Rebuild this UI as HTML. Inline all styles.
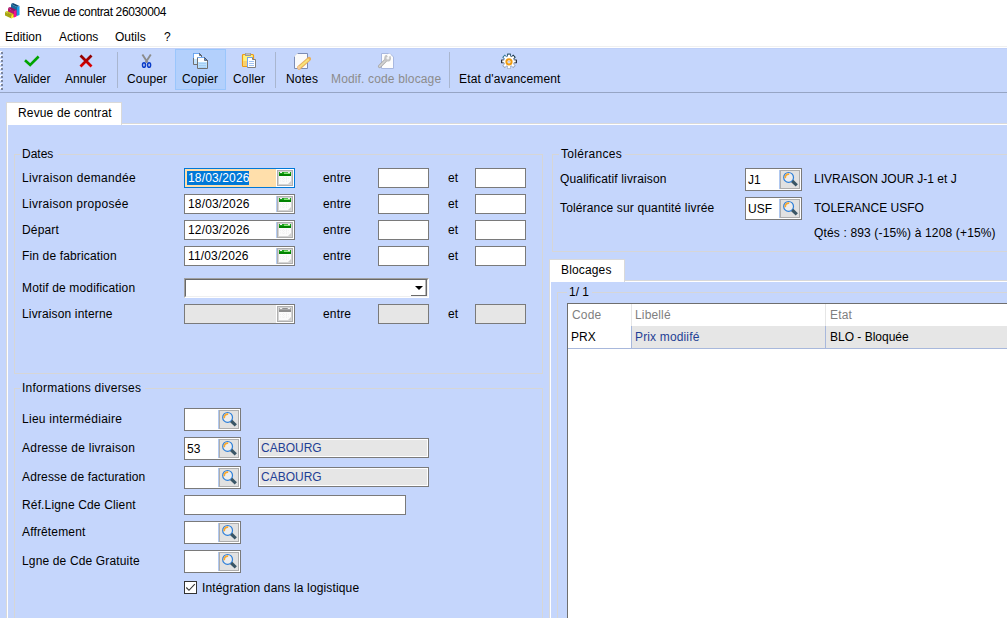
<!DOCTYPE html>
<html><head><meta charset="utf-8">
<style>
*{margin:0;padding:0;box-sizing:border-box}
html,body{width:1007px;height:618px;overflow:hidden}
body{position:relative;background:#fff;font-family:"Liberation Sans",sans-serif;font-size:12px;color:#000}
.a{position:absolute}
.t{position:absolute;white-space:pre;line-height:14px;font-size:12px;letter-spacing:0.15px}
.bl{background:#C5D6FC}
.grp{position:absolute;border:1px solid #D6D6D6}
.gl{position:absolute;white-space:pre;line-height:14px;background:#C5D6FC;padding:0 3px 0 2px}
.box{position:absolute;border:1px solid #7A7A7A;background:#fff;height:20px}
.sbox{position:absolute;border:1px solid #7A7A7A;background:#fff;width:57px;height:23px}
.sbtn{position:absolute;left:34px;top:1px;width:20px;height:19px;background:#E1E1E1;border:1px solid #ADADAD;border-left:1px solid #A6C0EE}
.sbtn svg{position:absolute;left:1px;top:0}
.cal{position:absolute;left:92px;top:1px;width:17px;height:17px}
.grey{background:#E6E6E6}
</style></head><body>

<!-- title bar -->
<svg class="a" style="left:0px;top:0px" width="22" height="22" viewBox="0 0 22 22">
<path d="M11 4 L13 3 L19.5 6 L17 7Z" fill="#0F4A78"/><path d="M11 4 L17 7 L17 16 L11 12.5Z" fill="#1C6A9C"/><path d="M17 7 L19.5 6 L19.5 15 L17 16Z" fill="#1A9BE8"/>
<path d="M8 8 L10 7 L16.5 10 L14 11Z" fill="#9A1060"/><path d="M8 8 L14 11 L14 17.5 L8 14.5Z" fill="#B8186E"/><path d="M14 11 L16.5 10 L16.5 16.5 L14 17.5Z" fill="#F4108C"/>
<path d="M5 12 L7 11 L13.5 14 L11.5 15Z" fill="#C4C418"/><path d="M5 12 L11.5 15 L11.5 18.5 L5 15.5Z" fill="#A6A612"/><path d="M11.5 15 L13.5 14 L13.5 17.5 L11.5 18.5Z" fill="#FAFA10"/>
</svg>
<div class="t" style="left:27px;top:5px;letter-spacing:-0.36px">Revue de contrat 26030004</div>

<!-- menu -->
<div class="t" style="left:5px;top:30px;letter-spacing:0">Edition</div>
<div class="t" style="left:59px;top:30px;letter-spacing:0">Actions</div>
<div class="t" style="left:115px;top:30px;letter-spacing:0">Outils</div>
<div class="t" style="left:164px;top:30px">?</div>
<div class="a" style="left:0;top:46px;width:1007px;height:1px;background:#F0F0F0"></div>

<!-- toolbar -->
<div class="a bl" style="left:0;top:48px;width:1007px;height:44px"></div><div class="a" style="left:0;top:48px;width:1007px;height:1px;background:#C0D0F8"></div>
<div class="a" style="left:0;top:92px;width:1007px;height:1px;background:#96A5C4"></div>
<div class="a bl" style="left:0;top:93px;width:1007px;height:525px"></div>

<div class="a" style="left:175px;top:49px;width:51px;height:41px;background:#B3D0FC;border:1px solid #9AC6FC"></div>
<div class="a" style="left:117px;top:52px;width:1px;height:36px;background:#A9B6CF"></div>
<div class="a" style="left:275px;top:52px;width:1px;height:36px;background:#A9B6CF"></div>
<div class="a" style="left:449px;top:52px;width:1px;height:36px;background:#A9B6CF"></div>

<div class="t" style="left:14px;top:72px;letter-spacing:0">Valider</div>
<div class="t" style="left:65px;top:72px;letter-spacing:0">Annuler</div>
<div class="t" style="left:127px;top:72px">Couper</div>
<div class="t" style="left:182px;top:72px">Copier</div>
<div class="t" style="left:233px;top:72px">Coller</div>
<div class="t" style="left:286px;top:72px">Notes</div>
<div class="t" style="left:331px;top:72px;color:#8C8C8C">Modif. code blocage</div>
<div class="t" style="left:459px;top:72px">Etat d'avancement</div>


<!-- gripper -->
<svg class="a" style="left:0;top:50px" width="4" height="40" viewBox="0 0 4 40"><rect x="0" y="1" width="2" height="1" fill="#FAFBFF"/><rect x="0" y="2" width="1" height="1" fill="#FAFBFF"/><rect x="1" y="2" width="2" height="2" fill="#7C869C"/><rect x="0" y="5" width="2" height="1" fill="#FAFBFF"/><rect x="0" y="6" width="1" height="1" fill="#FAFBFF"/><rect x="1" y="6" width="2" height="2" fill="#7C869C"/><rect x="0" y="9" width="2" height="1" fill="#FAFBFF"/><rect x="0" y="10" width="1" height="1" fill="#FAFBFF"/><rect x="1" y="10" width="2" height="2" fill="#7C869C"/><rect x="0" y="13" width="2" height="1" fill="#FAFBFF"/><rect x="0" y="14" width="1" height="1" fill="#FAFBFF"/><rect x="1" y="14" width="2" height="2" fill="#7C869C"/><rect x="0" y="17" width="2" height="1" fill="#FAFBFF"/><rect x="0" y="18" width="1" height="1" fill="#FAFBFF"/><rect x="1" y="18" width="2" height="2" fill="#7C869C"/><rect x="0" y="21" width="2" height="1" fill="#FAFBFF"/><rect x="0" y="22" width="1" height="1" fill="#FAFBFF"/><rect x="1" y="22" width="2" height="2" fill="#7C869C"/><rect x="0" y="25" width="2" height="1" fill="#FAFBFF"/><rect x="0" y="26" width="1" height="1" fill="#FAFBFF"/><rect x="1" y="26" width="2" height="2" fill="#7C869C"/><rect x="0" y="29" width="2" height="1" fill="#FAFBFF"/><rect x="0" y="30" width="1" height="1" fill="#FAFBFF"/><rect x="1" y="30" width="2" height="2" fill="#7C869C"/><rect x="0" y="33" width="2" height="1" fill="#FAFBFF"/><rect x="0" y="34" width="1" height="1" fill="#FAFBFF"/><rect x="1" y="34" width="2" height="2" fill="#7C869C"/><rect x="0" y="37" width="2" height="1" fill="#FAFBFF"/><rect x="0" y="38" width="1" height="1" fill="#FAFBFF"/><rect x="1" y="38" width="2" height="2" fill="#7C869C"/></svg>
<!-- valider -->
<svg class="a" style="left:22px;top:52px" width="20" height="16" viewBox="0 0 20 16"><path d="M3 8.2 L8.2 13 L16.6 4.5" stroke="#00A400" stroke-width="2.6" fill="none"/></svg>
<!-- annuler -->
<svg class="a" style="left:78px;top:53px" width="16" height="16" viewBox="0 0 16 16"><defs><linearGradient id="xr" x1="0" y1="0" x2="0" y2="1"><stop offset="0" stop-color="#8A0000"/><stop offset="1" stop-color="#E00000"/></linearGradient></defs><path d="M2.5 2.5 L13.5 13.5 M13.5 2.5 L2.5 13.5" stroke="url(#xr)" stroke-width="2.8"/></svg>
<!-- couper -->
<svg class="a" style="left:139px;top:52px" width="16" height="18" viewBox="0 0 16 18"><path d="M3.4 2.4 L8.6 10.6 M11.8 2.4 L6.6 10.6" stroke="#8C8C8C" stroke-width="1.9"/><ellipse cx="5" cy="13" rx="1.45" ry="2.3" stroke="#0A3CC8" stroke-width="1.6" fill="#F0F0F8"/><ellipse cx="10.1" cy="13" rx="1.45" ry="2.3" stroke="#0A3CC8" stroke-width="1.6" fill="#F0F0F8"/></svg>
<!-- copier -->
<svg class="a" style="left:192px;top:52px" width="17" height="18" viewBox="0 0 17 18"><path d="M1.5 1.5 H7.5 L9.5 3.5 V12.5 H1.5Z" fill="#fff" stroke="#707070"/><rect x="2" y="7" width="7" height="5" fill="#C4E4FC"/><path d="M1.5 1.5 H7.5 M1.5 1.5 V6" stroke="#6EA8F4" stroke-width="1"/><path d="M5.5 5.5 H12.5 L15.5 8.5 V16.5 H5.5Z" fill="#fff" stroke="#707070"/><rect x="6" y="10" width="9" height="6" fill="#BCE2FC"/><path d="M5.5 5.5 H12.5" stroke="#6EA8F4" stroke-width="1"/><path d="M7 11.5h7M7 13.5h7M7 15.3h7" stroke="#9CC4F0" stroke-width="0.7"/><path d="M12.5 5.5 L15.5 8.5 H12.5Z" fill="#4E8AE0" stroke="#404040" stroke-width="0.6"/><path d="M7.5 1.5 L9.5 3.5 H7.5Z" fill="#4E8AE0" stroke="#404040" stroke-width="0.6"/></svg>
<!-- coller -->
<svg class="a" style="left:241px;top:52px" width="17" height="18" viewBox="0 0 17 18"><rect x="1.5" y="2.5" width="11" height="12" rx="1" fill="#FFF27A" stroke="#EE9A12" stroke-width="1.2"/><rect x="2.2" y="9" width="4" height="5" fill="#F8D070"/><rect x="4" y="1" width="6" height="3" rx="0.5" fill="#9A9A9A"/><rect x="5" y="1.6" width="4" height="1" fill="#D8D8D8"/><path d="M6.5 5.5 H11.5 V7.5 H14.5 V15.5 H6.5Z" fill="#fff" stroke="#7E7E7E"/><path d="M6.5 15 V5.5 H11.5" stroke="#72A4F0" stroke-width="1" fill="none"/><path d="M8 9.5h5M8 11.5h5M8 13.5h5" stroke="#8AB4EE" stroke-width="0.8"/></svg>
<!-- notes -->
<svg class="a" style="left:293px;top:52px" width="18" height="18" viewBox="0 0 18 18"><path d="M4.5 1.5 H14.5 V16.5 H1.5 V4.5Z" fill="#FAFAFA" stroke="#7C8CB4"/><path d="M4.5 1.5 L1.5 4.5" stroke="#E8E8E8" stroke-width="1"/><path d="M6.2 15.6 L16 7" stroke="#E8B060" stroke-width="4.2" stroke-linecap="round"/><path d="M6.4 15.2 L15.8 7.2" stroke="#F8E478" stroke-width="2"/><circle cx="6" cy="15.6" r="1.6" fill="#F4CCA0"/></svg>
<!-- modif code blocage -->
<svg class="a" style="left:377px;top:52px" width="18" height="18" viewBox="0 0 18 18"><path d="M4.5 1.5 H13 L16.5 5 V16.5 H4.5Z" fill="#FDFDFD" stroke="#A8B8E0"/><path d="M2.6 14.4 L8.6 8.4" stroke="#A8A8A8" stroke-width="3.4" stroke-linecap="round"/><path d="M2.6 14.4 L8.6 8.4" stroke="#D4D4D4" stroke-width="1.6" stroke-linecap="round"/><circle cx="10.6" cy="6.2" r="3.4" fill="#C4C4C4"/><circle cx="10.9" cy="5.9" r="1.5" fill="#F4F4F4"/><rect x="10.6" y="1.6" width="2.6" height="3.2" fill="#FDFDFD" transform="rotate(45 11.9 3.2)"/></svg>
<!-- etat -->
<svg class="a" style="left:501px;top:53px" width="16" height="16" viewBox="0 0 16 16"><rect x="6.2" y="0.6" width="3.6" height="4" fill="#0E3A52" transform="rotate(0 8 8.4)"/><rect x="6.2" y="0.6" width="3.6" height="4" fill="#0A2A3A" transform="rotate(45 8 8.4)"/><rect x="6.2" y="0.6" width="3.6" height="4" fill="#080C10" transform="rotate(90 8 8.4)"/><rect x="6.2" y="0.6" width="3.6" height="4" fill="#9AA8C0" transform="rotate(135 8 8.4)"/><rect x="6.2" y="0.6" width="3.6" height="4" fill="#A8B4C8" transform="rotate(180 8 8.4)"/><rect x="6.2" y="0.6" width="3.6" height="4" fill="#9AA8C0" transform="rotate(225 8 8.4)"/><rect x="6.2" y="0.6" width="3.6" height="4" fill="#080C10" transform="rotate(270 8 8.4)"/><rect x="6.2" y="0.6" width="3.6" height="4" fill="#2A7090" transform="rotate(315 8 8.4)"/><circle cx="8" cy="8.4" r="5.4" fill="#9AA8C0"/><rect x="6.9" y="1.6" width="2.2" height="3" fill="#FFFFFF" transform="rotate(0 8 8.4)"/><rect x="6.9" y="1.6" width="2.2" height="3" fill="#FFFFFF" transform="rotate(45 8 8.4)"/><rect x="6.9" y="1.6" width="2.2" height="3" fill="#FFFFFF" transform="rotate(90 8 8.4)"/><rect x="6.9" y="1.6" width="2.2" height="3" fill="#FFFFFF" transform="rotate(135 8 8.4)"/><rect x="6.9" y="1.6" width="2.2" height="3" fill="#FFFFFF" transform="rotate(180 8 8.4)"/><rect x="6.9" y="1.6" width="2.2" height="3" fill="#FFFFFF" transform="rotate(225 8 8.4)"/><rect x="6.9" y="1.6" width="2.2" height="3" fill="#FFFFFF" transform="rotate(270 8 8.4)"/><rect x="6.9" y="1.6" width="2.2" height="3" fill="#FFFFFF" transform="rotate(315 8 8.4)"/><circle cx="8" cy="8.4" r="4.8" fill="#FFFFFF"/><circle cx="8" cy="8.8" r="2.6" fill="none" stroke="#EE9A10" stroke-width="2"/><circle cx="8" cy="8.8" r="0.9" fill="#A8B4D8"/></svg>
<!-- main tab panel -->
<div class="a" style="left:6px;top:123px;width:1001px;height:495px;border-top:1px solid #D9D9D9;border-left:1px solid #D9D9D9"></div>
<div class="a" style="left:7px;top:124px;width:1000px;height:494px;border-top:1px solid #fff;border-left:1px solid #fff"></div>
<div class="a" style="left:6px;top:102px;width:116px;height:23px;background:#fff;border:1px solid #D9D9D9;border-bottom:none"></div>
<div class="t" style="left:18px;top:106px">Revue de contrat</div>

<!-- Dates group -->
<div class="grp" style="left:14px;top:154px;width:529px;height:220px"></div>
<div class="gl" style="left:20px;top:147px;padding:0 5px 0 2px">Dates</div>
<div class="t" style="left:22px;top:171px;letter-spacing:0.33px">Livraison demandée</div>
<div class="t" style="left:22px;top:197px;letter-spacing:0.29px">Livraison proposée</div>
<div class="t" style="left:22px;top:223px">Départ</div>
<div class="t" style="left:22px;top:249px">Fin de fabrication</div>
<div class="t" style="left:22px;top:281px">Motif de modification</div>
<div class="t" style="left:22px;top:307px">Livraison interne</div>

<!-- Informations diverses group -->
<div class="grp" style="left:14px;top:388px;width:529px;height:300px"></div>
<div class="gl" style="left:20px;top:381px;padding:0 4px 0 2px;letter-spacing:0.25px">Informations diverses</div>
<div class="t" style="left:22px;top:412px;letter-spacing:0.27px">Lieu intermédiaire</div>
<div class="t" style="left:22px;top:441px;letter-spacing:0.25px">Adresse de livraison</div>
<div class="t" style="left:22px;top:470px">Adresse de facturation</div>
<div class="t" style="left:22px;top:498px">Réf.Ligne Cde Client</div>
<div class="t" style="left:22px;top:525px">Affrêtement</div>
<div class="t" style="left:22px;top:554px">Lgne de Cde Gratuite</div>

<!-- Tolerances group -->
<div class="grp" style="left:552px;top:154px;width:470px;height:98px"></div>
<div class="gl" style="left:559px;top:147px;letter-spacing:0.3px">Tolérances</div>
<div class="t" style="left:560px;top:172px">Qualificatif livraison</div>
<div class="t" style="left:560px;top:201px">Tolérance sur quantité livrée</div>
<div class="t" style="left:814px;top:172px;letter-spacing:0">LIVRAISON JOUR J-1 et J</div>
<div class="t" style="left:814px;top:201px;letter-spacing:0">TOLERANCE USFO</div>
<div class="t" style="left:814px;top:226px">Qtés : 893 (-15%) à 1208 (+15%)</div>

<!-- Blocages tab -->
<div class="a" style="left:549px;top:280px;width:458px;height:338px;border-top:1px solid #D9D9D9;border-left:1px solid #D9D9D9"></div>
<div class="a" style="left:550px;top:281px;width:457px;height:337px;border-top:1px solid #fff;border-left:1px solid #fff"></div>
<div class="a" style="left:549px;top:259px;width:76px;height:23px;background:#fff;border:1px solid #D9D9D9;border-bottom:none"></div>
<div class="t" style="left:561px;top:263px">Blocages</div>
<div class="grp" style="left:557px;top:292px;width:470px;height:340px"></div>
<div class="gl" style="left:567px;top:285px">1/ 1</div>

<div class="a" style="left:184px;top:168px;width:111px;height:20px;border:1px solid #0078D7;background:#fff"></div><div class="a" style="left:185px;top:169px;width:91px;height:18px;background:#FFDFAB"></div><div class="a" style="left:187px;top:171px;width:62px;height:14px;background:#0078D7"></div><div class="t" style="left:188px;top:171px;color:#fff">18/03/2026</div><svg class="a" style="left:277px;top:170px" width="16" height="16" viewBox="0 0 16 16"><rect x="0.5" y="0.5" width="15" height="15" fill="#D4D4D4" stroke="#B0B0B0"/><rect x="2" y="2" width="12" height="4" fill="#1AA01A"/><rect x="2" y="4" width="12" height="2" fill="#008200"/><rect x="7" y="2.5" width="6" height="1.5" fill="#8CE47C"/><rect x="3" y="2" width="2" height="1" fill="#F0F0F0"/><rect x="11" y="2" width="2" height="1" fill="#F0F0F0"/><rect x="2" y="6" width="12" height="8" fill="#FBFBFB"/><path d="M3 8.5h10M3 11h10M6.5 7v6M9.5 7v6" stroke="#ECECEC" stroke-width="0.7" stroke-dasharray="1 1"/><path d="M14 14 L11 14 L14 11Z" fill="#D0D0D0"/></svg><div class="box" style="left:378px;top:168px;width:51px"></div><div class="box" style="left:475px;top:168px;width:51px"></div><div class="t" style="left:323px;top:171px">entre</div><div class="t" style="left:448px;top:171px">et</div><div class="box" style="left:184px;top:194px;width:111px"></div><div class="t" style="left:188px;top:197px">18/03/2026</div><div class="a" style="left:276px;top:196px;width:1px;height:16px;background:#B4CCF4"></div><svg class="a" style="left:277px;top:196px" width="16" height="16" viewBox="0 0 16 16"><rect x="0.5" y="0.5" width="15" height="15" fill="#D4D4D4" stroke="#B0B0B0"/><rect x="2" y="2" width="12" height="4" fill="#1AA01A"/><rect x="2" y="4" width="12" height="2" fill="#008200"/><rect x="7" y="2.5" width="6" height="1.5" fill="#8CE47C"/><rect x="3" y="2" width="2" height="1" fill="#F0F0F0"/><rect x="11" y="2" width="2" height="1" fill="#F0F0F0"/><rect x="2" y="6" width="12" height="8" fill="#FBFBFB"/><path d="M3 8.5h10M3 11h10M6.5 7v6M9.5 7v6" stroke="#ECECEC" stroke-width="0.7" stroke-dasharray="1 1"/><path d="M14 14 L11 14 L14 11Z" fill="#D0D0D0"/></svg><div class="box" style="left:378px;top:194px;width:51px"></div><div class="box" style="left:475px;top:194px;width:51px"></div><div class="t" style="left:323px;top:197px">entre</div><div class="t" style="left:448px;top:197px">et</div><div class="box" style="left:184px;top:220px;width:111px"></div><div class="t" style="left:188px;top:223px">12/03/2026</div><div class="a" style="left:276px;top:222px;width:1px;height:16px;background:#B4CCF4"></div><svg class="a" style="left:277px;top:222px" width="16" height="16" viewBox="0 0 16 16"><rect x="0.5" y="0.5" width="15" height="15" fill="#D4D4D4" stroke="#B0B0B0"/><rect x="2" y="2" width="12" height="4" fill="#1AA01A"/><rect x="2" y="4" width="12" height="2" fill="#008200"/><rect x="7" y="2.5" width="6" height="1.5" fill="#8CE47C"/><rect x="3" y="2" width="2" height="1" fill="#F0F0F0"/><rect x="11" y="2" width="2" height="1" fill="#F0F0F0"/><rect x="2" y="6" width="12" height="8" fill="#FBFBFB"/><path d="M3 8.5h10M3 11h10M6.5 7v6M9.5 7v6" stroke="#ECECEC" stroke-width="0.7" stroke-dasharray="1 1"/><path d="M14 14 L11 14 L14 11Z" fill="#D0D0D0"/></svg><div class="box" style="left:378px;top:220px;width:51px"></div><div class="box" style="left:475px;top:220px;width:51px"></div><div class="t" style="left:323px;top:223px">entre</div><div class="t" style="left:448px;top:223px">et</div><div class="box" style="left:184px;top:246px;width:111px"></div><div class="t" style="left:188px;top:249px">11/03/2026</div><div class="a" style="left:276px;top:248px;width:1px;height:16px;background:#B4CCF4"></div><svg class="a" style="left:277px;top:248px" width="16" height="16" viewBox="0 0 16 16"><rect x="0.5" y="0.5" width="15" height="15" fill="#D4D4D4" stroke="#B0B0B0"/><rect x="2" y="2" width="12" height="4" fill="#1AA01A"/><rect x="2" y="4" width="12" height="2" fill="#008200"/><rect x="7" y="2.5" width="6" height="1.5" fill="#8CE47C"/><rect x="3" y="2" width="2" height="1" fill="#F0F0F0"/><rect x="11" y="2" width="2" height="1" fill="#F0F0F0"/><rect x="2" y="6" width="12" height="8" fill="#FBFBFB"/><path d="M3 8.5h10M3 11h10M6.5 7v6M9.5 7v6" stroke="#ECECEC" stroke-width="0.7" stroke-dasharray="1 1"/><path d="M14 14 L11 14 L14 11Z" fill="#D0D0D0"/></svg><div class="box" style="left:378px;top:246px;width:51px"></div><div class="box" style="left:475px;top:246px;width:51px"></div><div class="t" style="left:323px;top:249px">entre</div><div class="t" style="left:448px;top:249px">et</div><div class="a" style="left:184px;top:278px;width:245px;height:20px;border:1px solid;border-color:#A0A0A0 #FFFFFF #FFFFFF #A0A0A0;background:#fff"></div>
<div class="a" style="left:185px;top:279px;width:243px;height:18px;border:1px solid;border-color:#696969 #F0F0F0 #F0F0F0 #696969"></div>
<div class="a" style="left:425px;top:280px;width:1px;height:16px;background:#B8B8B8"></div><div class="a" style="left:426px;top:280px;width:1px;height:16px;background:#6A6A6A"></div>
<div class="a" style="left:411px;top:295px;width:16px;height:1px;background:#6A6A6A"></div>
<svg class="a" style="left:415px;top:286px" width="8" height="4" viewBox="0 0 8 4"><path d="M0 0H8L4 4Z" fill="#000"/></svg>
<div class="box grey" style="left:184px;top:304px;width:111px"></div><div class="a" style="left:276px;top:305px;width:18px;height:18px;background:#fff"></div><svg class="a" style="left:277px;top:306px" width="16" height="16" viewBox="0 0 16 16"><rect x="0.5" y="0.5" width="15" height="15" fill="#D4D4D4" stroke="#B0B0B0"/><rect x="2" y="2" width="12" height="4" fill="#A8A8A8"/><rect x="2" y="4" width="12" height="2" fill="#8E8E8E"/><rect x="6" y="2" width="4" height="1" fill="#909090"/><rect x="3" y="2" width="2" height="1" fill="#F0F0F0"/><rect x="11" y="2" width="2" height="1" fill="#F0F0F0"/><rect x="2" y="6" width="12" height="8" fill="#FBFBFB"/><path d="M3 8.5h10M3 11h10M6.5 7v6M9.5 7v6" stroke="#ECECEC" stroke-width="0.7" stroke-dasharray="1 1"/><path d="M14 14 L11 14 L14 11Z" fill="#D0D0D0"/></svg><div class="t" style="left:323px;top:307px">entre</div><div class="t" style="left:448px;top:307px">et</div><div class="box grey" style="left:378px;top:304px;width:51px"></div><div class="box grey" style="left:475px;top:304px;width:51px"></div><div class="sbox" style="left:184px;top:408px"></div><div class="a" style="left:218px;top:410px;width:1px;height:19px;background:#B0C8F0"></div><svg class="a" style="left:219px;top:410px" width="20" height="19" viewBox="0 0 20 19"><rect x="0.5" y="0.5" width="19" height="18" fill="#E1E1E1" stroke="#ADADAD"/><circle cx="8.6" cy="7.4" r="4.9" fill="#EDEDED" stroke="#2D7FD9" stroke-width="1.2"/><path d="M5.3 8.2 A3.4 3.4 0 0 1 9.2 4.1" stroke="#F8A830" stroke-width="1.7" fill="none"/><path d="M12.2 11 L16.8 15.3" stroke="#3A5666" stroke-width="3.1" stroke-linecap="butt"/></svg><div class="sbox" style="left:184px;top:437px"></div><div class="a" style="left:218px;top:439px;width:1px;height:19px;background:#B0C8F0"></div><svg class="a" style="left:219px;top:439px" width="20" height="19" viewBox="0 0 20 19"><rect x="0.5" y="0.5" width="19" height="18" fill="#E1E1E1" stroke="#ADADAD"/><circle cx="8.6" cy="7.4" r="4.9" fill="#EDEDED" stroke="#2D7FD9" stroke-width="1.2"/><path d="M5.3 8.2 A3.4 3.4 0 0 1 9.2 4.1" stroke="#F8A830" stroke-width="1.7" fill="none"/><path d="M12.2 11 L16.8 15.3" stroke="#3A5666" stroke-width="3.1" stroke-linecap="butt"/></svg><div class="t" style="left:187px;top:442px;letter-spacing:0">53</div><div class="sbox" style="left:184px;top:466px"></div><div class="a" style="left:218px;top:468px;width:1px;height:19px;background:#B0C8F0"></div><svg class="a" style="left:219px;top:468px" width="20" height="19" viewBox="0 0 20 19"><rect x="0.5" y="0.5" width="19" height="18" fill="#E1E1E1" stroke="#ADADAD"/><circle cx="8.6" cy="7.4" r="4.9" fill="#EDEDED" stroke="#2D7FD9" stroke-width="1.2"/><path d="M5.3 8.2 A3.4 3.4 0 0 1 9.2 4.1" stroke="#F8A830" stroke-width="1.7" fill="none"/><path d="M12.2 11 L16.8 15.3" stroke="#3A5666" stroke-width="3.1" stroke-linecap="butt"/></svg><div class="sbox" style="left:184px;top:521px"></div><div class="a" style="left:218px;top:523px;width:1px;height:19px;background:#B0C8F0"></div><svg class="a" style="left:219px;top:523px" width="20" height="19" viewBox="0 0 20 19"><rect x="0.5" y="0.5" width="19" height="18" fill="#E1E1E1" stroke="#ADADAD"/><circle cx="8.6" cy="7.4" r="4.9" fill="#EDEDED" stroke="#2D7FD9" stroke-width="1.2"/><path d="M5.3 8.2 A3.4 3.4 0 0 1 9.2 4.1" stroke="#F8A830" stroke-width="1.7" fill="none"/><path d="M12.2 11 L16.8 15.3" stroke="#3A5666" stroke-width="3.1" stroke-linecap="butt"/></svg><div class="sbox" style="left:184px;top:550px"></div><div class="a" style="left:218px;top:552px;width:1px;height:19px;background:#B0C8F0"></div><svg class="a" style="left:219px;top:552px" width="20" height="19" viewBox="0 0 20 19"><rect x="0.5" y="0.5" width="19" height="18" fill="#E1E1E1" stroke="#ADADAD"/><circle cx="8.6" cy="7.4" r="4.9" fill="#EDEDED" stroke="#2D7FD9" stroke-width="1.2"/><path d="M5.3 8.2 A3.4 3.4 0 0 1 9.2 4.1" stroke="#F8A830" stroke-width="1.7" fill="none"/><path d="M12.2 11 L16.8 15.3" stroke="#3A5666" stroke-width="3.1" stroke-linecap="butt"/></svg><div class="box grey" style="left:258px;top:438px;width:171px;border-color:#7A7A7A;box-shadow:inset 0 0 0 1px #fff"></div><div class="t" style="left:261px;top:441px;color:#1F3F95;letter-spacing:0">CABOURG</div><div class="box grey" style="left:258px;top:467px;width:171px;border-color:#7A7A7A;box-shadow:inset 0 0 0 1px #fff"></div><div class="t" style="left:261px;top:470px;color:#1F3F95;letter-spacing:0">CABOURG</div><div class="box" style="left:184px;top:495px;width:222px"></div><div class="a" style="left:184px;top:581px;width:13px;height:13px;border:1px solid #333;background:#fff"></div>
<svg class="a" style="left:184px;top:581px" width="13" height="13" viewBox="0 0 13 13"><path d="M2.3 6.5 L5 9.3 L10.8 3.2" stroke="#333" stroke-width="1.1" fill="none"/></svg>
<div class="t" style="left:202px;top:581px">Intégration dans la logistique</div>
<div class="sbox" style="left:745px;top:168px"></div><div class="a" style="left:779px;top:170px;width:1px;height:19px;background:#B0C8F0"></div><svg class="a" style="left:780px;top:170px" width="20" height="19" viewBox="0 0 20 19"><rect x="0.5" y="0.5" width="19" height="18" fill="#E1E1E1" stroke="#ADADAD"/><circle cx="8.6" cy="7.4" r="4.9" fill="#EDEDED" stroke="#2D7FD9" stroke-width="1.2"/><path d="M5.3 8.2 A3.4 3.4 0 0 1 9.2 4.1" stroke="#F8A830" stroke-width="1.7" fill="none"/><path d="M12.2 11 L16.8 15.3" stroke="#3A5666" stroke-width="3.1" stroke-linecap="butt"/></svg><div class="t" style="left:748px;top:173px;letter-spacing:0">J1</div><div class="sbox" style="left:745px;top:197px"></div><div class="a" style="left:779px;top:199px;width:1px;height:19px;background:#B0C8F0"></div><svg class="a" style="left:780px;top:199px" width="20" height="19" viewBox="0 0 20 19"><rect x="0.5" y="0.5" width="19" height="18" fill="#E1E1E1" stroke="#ADADAD"/><circle cx="8.6" cy="7.4" r="4.9" fill="#EDEDED" stroke="#2D7FD9" stroke-width="1.2"/><path d="M5.3 8.2 A3.4 3.4 0 0 1 9.2 4.1" stroke="#F8A830" stroke-width="1.7" fill="none"/><path d="M12.2 11 L16.8 15.3" stroke="#3A5666" stroke-width="3.1" stroke-linecap="butt"/></svg><div class="t" style="left:748px;top:202px;letter-spacing:0">USF</div><div class="a" style="left:567px;top:303px;width:440px;height:315px;border-top:1px solid #6E6E6E;border-left:1px solid #6E6E6E;background:#fff"></div>
<div class="a" style="left:631px;top:304px;width:1px;height:22px;background:#E6E6E6"></div>
<div class="a" style="left:825px;top:304px;width:1px;height:22px;background:#E6E6E6"></div>
<div class="a grey" style="left:632px;top:326px;width:375px;height:22px"></div>
<div class="a" style="left:631px;top:326px;width:1px;height:22px;background:#A8B8DC"></div>
<div class="a" style="left:825px;top:326px;width:1px;height:22px;background:#A8B8DC"></div>
<div class="a" style="left:568px;top:348px;width:439px;height:1px;background:#A8B8DC"></div>
<div class="t" style="left:572px;top:308px;color:#7F7F7F">Code</div>
<div class="t" style="left:635px;top:308px;color:#7F7F7F">Libellé</div>
<div class="t" style="left:830px;top:308px;color:#7F7F7F">Etat</div>
<div class="t" style="left:571px;top:330px;letter-spacing:0">PRX</div>
<div class="t" style="left:635px;top:330px;color:#1F3F95">Prix modiifé</div>
<div class="t" style="left:830px;top:330px;letter-spacing:0">BLO - Bloquée</div>

</body></html>
